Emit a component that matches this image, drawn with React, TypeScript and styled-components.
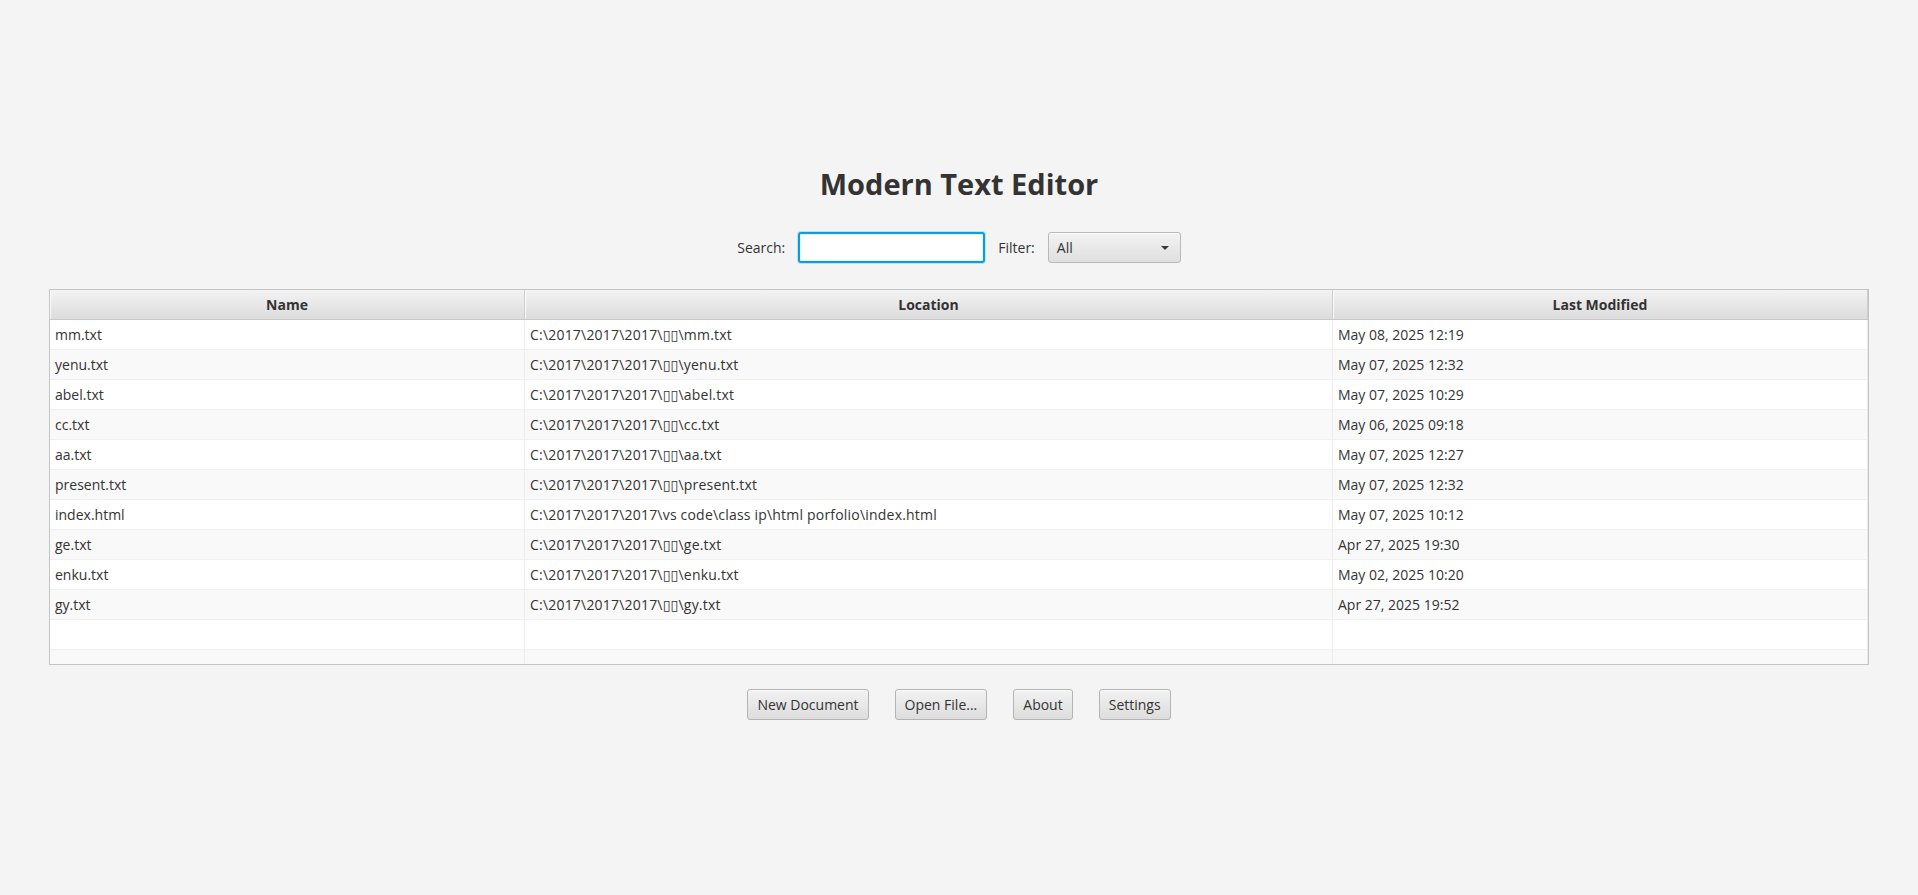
import styled, { createGlobalStyle } from "styled-components";

const GlobalStyle = createGlobalStyle`
    html, body {
        margin: 0;
        padding: 0;
        background-color: #f4f4f4;
    }
    body {
        font-family: 'Open Sans', 'Noto Sans', 'DejaVu Sans', sans-serif;
        font-size: 14px;
        color: #333333;
    }
`;

const Page = styled.main`
    display: flex;
    flex-direction: column;
    align-items: center;
    padding-top: 164px;
    min-height: 100vh;
    box-sizing: border-box;
`;

const Title = styled.h1`
    margin: 0;
    font-size: 29px;
    line-height: 40px;
    font-weight: 700;
    color: #333333;
`;

const SearchBar = styled.div`
    display: flex;
    align-items: center;
    gap: 13px;
    margin-top: 28px;
    height: 31px;
`;

const FieldLabel = styled.label`
    font-size: 14px;
    color: #333333;
`;

const SearchInput = styled.input`
    box-sizing: border-box;
    width: 187px;
    height: 31px;
    padding: 0 7px;
    border: 2px solid #0a9fd8;
    border-radius: 3px;
    background: #ffffff;
    box-shadow: 0 0 0 1px rgba(3, 158, 211, 0.22), inset 0 0 0 1px rgba(3, 158, 211, 0.12);
    font-family: inherit;
    font-size: 14px;
    outline: none;
`;

const ComboBox = styled.div`
    box-sizing: border-box;
    width: 133px;
    height: 31px;
    display: flex;
    align-items: center;
    justify-content: space-between;
    padding: 0 11px 0 8px;
    border: 1px solid #b9b9b9;
    border-radius: 3px;
    background: linear-gradient(to bottom, #f3f3f3, #dfdfdf);
    box-shadow: inset 0 1px 0 rgba(255, 255, 255, 0.75);
    cursor: default;
`;

// small down arrow of the combo box
const Arrow = styled.span`
    width: 0;
    height: 0;
    border-left: 4px solid transparent;
    border-right: 4px solid transparent;
    border-top: 4px solid #3a3a3a;
`;

const TableBox = styled.section`
    align-self: stretch;
    margin: 26px 49px 0;
    border: 1px solid #c4c4c4;
    background: #ffffff;
`;

const Grid = styled.div`
    display: grid;
    grid-template-columns: 475px 808px 1fr;
`;

const HeaderRow = styled(Grid)`
    height: 30px;
    box-sizing: border-box;
    border-bottom: 1px solid #c8c8c8;
    background: linear-gradient(to bottom, #f3f3f3, #dcdcdc);
`;

const HeaderCell = styled.div`
    display: flex;
    align-items: center;
    justify-content: center;
    border-right: 1px solid #cdcdcd;
    box-shadow: inset 1px 0 0 rgba(255, 255, 255, 0.8);
    font-weight: 700;
    font-size: 14px;
    color: #333333;
`;

const Body = styled.div`
    height: 344px;
    overflow: hidden;
`;

const Row = styled(Grid)<{ $alt: boolean }>`
    height: 30px;
    box-sizing: border-box;
    border-bottom: 1px solid #efefef;
    background-color: ${(p) => (p.$alt ? "#f9f9f9" : "#ffffff")};
`;

const Cell = styled.div<{ $wide?: boolean }>`
    padding: 0 5px;
    line-height: 29px;
    border-right: 1px solid #ececec;
    white-space: nowrap;
    overflow: hidden;
    font-size: 14px;
    letter-spacing: ${(p) => (p.$wide ? "0.2px" : "0")};
    color: #333333;
`;

const ButtonBar = styled.div`
    display: flex;
    gap: 26px;
    margin-top: 24px;
`;

const Button = styled.button`
    box-sizing: border-box;
    height: 31px;
    padding: 0 9px;
    border: 1px solid #b3b3b3;
    border-radius: 3px;
    background: linear-gradient(to bottom, #f2f2f2, #dddddd);
    box-shadow: inset 0 1px 0 rgba(255, 255, 255, 0.75);
    font-family: inherit;
    font-size: 14px;
    color: #333333;
    cursor: pointer;

    &:hover { background: linear-gradient(to bottom, #f7f7f7, #e4e4e4); }
`;

type FileEntry = {
    name: string;
    location: string;
    modified: string;
};

// the ▯▯ are the unrenderable folder name, as it shows in the original
const files: FileEntry[] = [
    { name: "mm.txt", location: "C:\\2017\\2017\\2017\\▯▯\\mm.txt", modified: "May 08, 2025 12:19" },
    { name: "yenu.txt", location: "C:\\2017\\2017\\2017\\▯▯\\yenu.txt", modified: "May 07, 2025 12:32" },
    { name: "abel.txt", location: "C:\\2017\\2017\\2017\\▯▯\\abel.txt", modified: "May 07, 2025 10:29" },
    { name: "cc.txt", location: "C:\\2017\\2017\\2017\\▯▯\\cc.txt", modified: "May 06, 2025 09:18" },
    { name: "aa.txt", location: "C:\\2017\\2017\\2017\\▯▯\\aa.txt", modified: "May 07, 2025 12:27" },
    { name: "present.txt", location: "C:\\2017\\2017\\2017\\▯▯\\present.txt", modified: "May 07, 2025 12:32" },
    { name: "index.html", location: "C:\\2017\\2017\\2017\\vs code\\class ip\\html porfolio\\index.html", modified: "May 07, 2025 10:12" },
    { name: "ge.txt", location: "C:\\2017\\2017\\2017\\▯▯\\ge.txt", modified: "Apr 27, 2025 19:30" },
    { name: "enku.txt", location: "C:\\2017\\2017\\2017\\▯▯\\enku.txt", modified: "May 02, 2025 10:20" },
    { name: "gy.txt", location: "C:\\2017\\2017\\2017\\▯▯\\gy.txt", modified: "Apr 27, 2025 19:52" },
];

export default function App() {
    // two blank rows fill the rest of the table, like the real TableView does
    const rows: (FileEntry | null)[] = [...files, null, null];

    return (
        <>
            <GlobalStyle />
            <Page>
                <Title>Modern Text Editor</Title>

                <SearchBar>
                    <FieldLabel htmlFor="search">Search:</FieldLabel>
                    <SearchInput id="search" type="text" />
                    <FieldLabel>Filter:</FieldLabel>
                    <ComboBox>
                        <span>All</span>
                        <Arrow />
                    </ComboBox>
                </SearchBar>

                <TableBox>
                    <HeaderRow>
                        <HeaderCell>Name</HeaderCell>
                        <HeaderCell>Location</HeaderCell>
                        <HeaderCell>Last Modified</HeaderCell>
                    </HeaderRow>
                    <Body>
                        {rows.map((f, i) => (
                            <Row key={i} $alt={i % 2 === 1}>
                                <Cell>{f?.name}</Cell>
                                <Cell $wide>{f?.location}</Cell>
                                <Cell>{f?.modified}</Cell>
                            </Row>
                        ))}
                    </Body>
                </TableBox>

                <ButtonBar>
                    <Button>New Document</Button>
                    <Button>Open File...</Button>
                    <Button>About</Button>
                    <Button>Settings</Button>
                </ButtonBar>
            </Page>
        </>
    );
}
